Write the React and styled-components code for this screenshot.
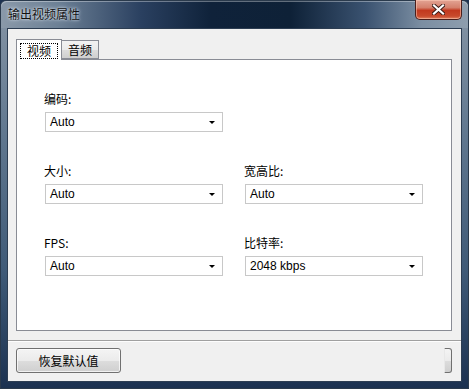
import React from 'react';
import styled, { createGlobalStyle } from 'styled-components';

const GlobalStyle = createGlobalStyle`
    html, body {
        margin: 0;
        padding: 0;
        width: 469px;
        height: 389px;
        overflow: hidden;
        background: #1d3250;
    }
`;

const Window = styled.div`
    width: 469px;
    height: 389px;
    box-sizing: border-box;
    display: flex;
    flex-direction: column;
    background: linear-gradient(to bottom, #8796a6 0%, #60778f 35%, #3f5a77 70%, #1b3150 100%);
    border: 1px solid #2a3a4c;
    border-radius: 6px 6px 0 0;
    font-family: "Liberation Sans", "Noto Sans CJK SC", sans-serif;
    font-size: 12px;
    color: #000;
`;

const TitleBar = styled.div`
    height: 27px;
    display: flex;
    align-items: flex-start;
    padding: 0 6px 0 7px;
    border-radius: 6px 6px 0 0;
    background: linear-gradient(to right, #8a99a9 0%, #6d8196 12%, #2a4060 30%, #0f223a 45%, #0e2137 62%, #3a5270 78%, #7b8ea2 90%, #8e9eae 100%);
    box-shadow: inset 0 1px 0 rgba(255, 255, 255, 0.35);
`;

const Title = styled.div`
    margin-top: 5px;
    font-family: "Noto Sans CJK SC", sans-serif;
    font-size: 12px;
    line-height: 16px;
    color: #111;
    text-shadow: 0 0 4px rgba(225, 235, 245, 0.95), 0 0 2px rgba(225, 235, 245, 0.9);
`;

const CloseButton = styled.div`
    margin-left: auto;
    margin-top: -1px;
    width: 45px;
    height: 19px;
    display: flex;
    align-items: center;
    justify-content: center;
    border: 1px solid #4a1f1c;
    border-top: none;
    border-radius: 0 0 5px 5px;
    background: linear-gradient(to bottom, #e3a494 0%, #d4806c 40%, #c2391f 55%, #c84a2c 85%, #e08060 100%);
    box-shadow: inset 0 0 0 1px rgba(255, 210, 190, 0.5);
`;

const Client = styled.div`
    flex: 1;
    margin: 0 6px 6px 6px;
    border: 1px solid #2c3d52;
    background: #f0f0f0;
    display: flex;
    flex-direction: column;
`;

const TabArea = styled.div`
    padding: 10px 9px 0 8px;
`;

const TabStrip = styled.div`
    display: flex;
    align-items: flex-end;
    height: 20px;
    position: relative;
    z-index: 1;
`;

const Tab = styled.div`
    box-sizing: border-box;
    display: flex;
    align-items: center;
    justify-content: center;
    font-family: "Noto Sans CJK SC", sans-serif;
    font-size: 12px;
    border: 1px solid #898c95;
    border-bottom: ${p => (p.active ? 'none' : '1px solid #898c95')};
    height: ${p => (p.active ? '21px' : '19px')};
    margin-bottom: ${p => (p.active ? '-1px' : '0')};
    width: ${p => (p.active ? '46px' : '38px')};
    margin-left: ${p => (p.active ? '0' : '-1px')};
    background: ${p => (p.active ? '#fff' : 'linear-gradient(to bottom, #f2f2f2 0%, #ebebeb 50%, #dddddd 51%, #cfcfcf 100%)')};
`;

const FocusRect = styled.span`
    display: flex;
    align-items: center;
    justify-content: center;
    width: 38px;
    height: 16px;
    margin-top: 1px;
    box-sizing: border-box;
    border: 1px dotted #000;
    line-height: 14px;
`;

const Panel = styled.div`
    height: 272px;
    box-sizing: border-box;
    border: 1px solid #898c95;
    background: #fff;
    padding: 31px 0 0 28px;
    display: grid;
    grid-template-columns: 178px 178px;
    column-gap: 22px;
    row-gap: 31px;
    align-content: start;
`;

const Field = styled.div`
    display: flex;
    flex-direction: column;
    grid-column: ${p => p.col};
    grid-row: ${p => p.row};
`;

const Label = styled.div`
    font-family: "Noto Sans CJK SC", sans-serif;
    font-size: 12px;
    line-height: 16px;
    height: 16px;
    margin-bottom: 5px;
    margin-left: -1px;
    color: #000;
`;

const Select = styled.div`
    box-sizing: border-box;
    height: 20px;
    border: 1px solid #c8c8c8;
    background: #fff;
    display: flex;
    align-items: center;
    padding: 0 7px 0 4px;
    font-family: "Liberation Sans", sans-serif;
    font-size: 12px;
    color: #000;
`;

const Arrow = styled.span`
    margin-left: auto;
    width: 0;
    height: 0;
    border-left: 3px solid transparent;
    border-right: 3px solid transparent;
    border-top: 3px solid #000;
    margin-top: 1px;
`;

const Separator = styled.div`
    margin-top: 9px;
    height: 0;
    border-top: 1px solid #a0a0a0;
    border-bottom: 1px solid #fdfdfd;
`;

const ButtonRow = styled.div`
    display: flex;
    align-items: flex-start;
    padding: 6px 9px 0 8px;
`;

const Button = styled.div`
    box-sizing: border-box;
    width: 105px;
    height: 25px;
    display: flex;
    align-items: center;
    justify-content: center;
    border: 1px solid #707070;
    border-radius: 3px;
    background: linear-gradient(to bottom, #f4f4f4 0%, #ebebeb 50%, #dddddd 51%, #cfcfcf 100%);
    box-shadow: inset 0 0 0 1px rgba(255, 255, 255, 0.7);
    font-family: "Noto Sans CJK SC", sans-serif;
    font-size: 12px;
    color: #000;
`;

const ClippedButton = styled.div`
    box-sizing: border-box;
    width: 8px;
    height: 25px;
    margin-left: auto;
    border: 1px solid #707070;
    border-left: 1px solid #e8e8e8;
    border-radius: 0 3px 3px 0;
    background: linear-gradient(to bottom, #f4f4f4 0%, #ebebeb 50%, #dddddd 51%, #cfcfcf 100%);
`;

const fields = [
    { label: '编码:', value: 'Auto', col: 1, row: 1 },
    { label: '大小:', value: 'Auto', col: 1, row: 2 },
    { label: '宽高比:', value: 'Auto', col: 2, row: 2 },
    { label: 'FPS:', value: 'Auto', col: 1, row: 3 },
    { label: '比特率:', value: '2048 kbps', col: 2, row: 3 },
];

const CloseIcon = () => (
    <svg width="13" height="11" viewBox="0 0 13 11">
        <path d="M2 1.5 L11 9.5 M11 1.5 L2 9.5" stroke="#3a1a14" strokeWidth="4" strokeLinecap="square" />
        <path d="M2 1.5 L11 9.5 M11 1.5 L2 9.5" stroke="#ffffff" strokeWidth="2.2" strokeLinecap="square" />
    </svg>
);

export default function App() {
    return (
        <>
            <GlobalStyle />
            <Window>
                <TitleBar>
                    <Title>输出视频属性</Title>
                    <CloseButton>
                        <CloseIcon />
                    </CloseButton>
                </TitleBar>
                <Client>
                    <TabArea>
                        <TabStrip>
                            <Tab active>
                                <FocusRect>视频</FocusRect>
                            </Tab>
                            <Tab>音频</Tab>
                        </TabStrip>
                        <Panel>
                            {fields.map(f => (
                                <Field key={f.label} col={f.col} row={f.row}>
                                    <Label>{f.label}</Label>
                                    <Select>
                                        {f.value}
                                        <Arrow />
                                    </Select>
                                </Field>
                            ))}
                        </Panel>
                    </TabArea>
                    <Separator />
                    <ButtonRow>
                        <Button>恢复默认值</Button>
                        <ClippedButton />
                    </ButtonRow>
                </Client>
            </Window>
        </>
    );
}
